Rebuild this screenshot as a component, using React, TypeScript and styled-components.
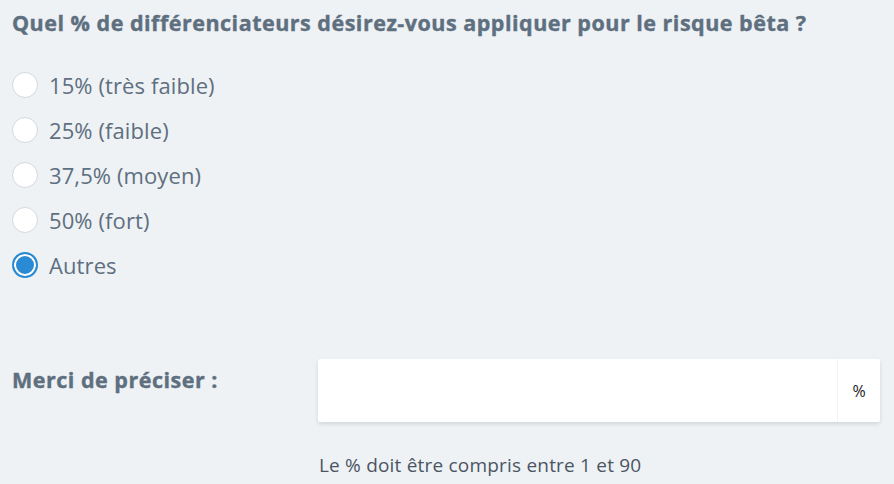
import styled, { createGlobalStyle } from "styled-components";

const GlobalStyle = createGlobalStyle`
  html, body {
    margin: 0;
    padding: 0;
    background: #eef2f5;
  }
  body {
    font-family: "Open Sans", "Noto Sans", sans-serif;
  }
`;

// options de risque bêta
const options = [
  "15% (très faible)",
  "25% (faible)",
  "37,5% (moyen)",
  "50% (fort)",
  "Autres",
];

function App() {
  const selected = "Autres";

  return (
    <Page>
      <GlobalStyle />
      <Question>Quel % de différenciateurs désirez-vous appliquer pour le risque bêta ?</Question>
      <OptionList>
        {options.map((label) => (
          <Option key={label}>
            <Radio checked={label === selected} />
            <OptionLabel>{label}</OptionLabel>
          </Option>
        ))}
      </OptionList>
      <PrecisionRow>
        <PrecisionLabel>Merci de préciser :</PrecisionLabel>
        <Field>
          <FieldInput type="text" />
          <Suffix>%</Suffix>
        </Field>
      </PrecisionRow>
      <Hint>Le % doit être compris entre 1 et 90</Hint>
    </Page>
  );
}

//CSS
const Page = styled.div`
  width: 894px;
  height: 484px;
  box-sizing: border-box;
  padding: 9px 10px 0 12px;
  overflow: hidden;
`;

const Question = styled.h2`
  margin: 0;
  font-size: 21.5px;
  line-height: 28px;
  font-weight: 700;
  color: #5e6f7f;
  letter-spacing: 0.5px;
  -webkit-text-stroke: 0.4px #5e6f7f;
  white-space: nowrap;
`;

const OptionList = styled.div`
  display: flex;
  flex-direction: column;
  gap: 19px;
  margin-top: 35px;
`;

const Option = styled.label`
  display: flex;
  align-items: center;
  gap: 11px;
  height: 26px;
  cursor: pointer;
`;

const Radio = styled.span<{ checked: boolean }>`
  width: 26px;
  height: 26px;
  box-sizing: border-box;
  border-radius: 50%;
  background: ${(p) => (p.checked ? "#2a8bd4" : "#fff")};
  border: ${(p) => (p.checked ? "2px solid #2a8bd4" : "1px solid #d3d8dd")};
  box-shadow: ${(p) => (p.checked ? "inset 0 0 0 2px #fff" : "none")};
  flex-shrink: 0;
`;

const OptionLabel = styled.span`
  font-size: 22px;
  color: #5e6f7f;
  letter-spacing: 0.1px;
`;

const PrecisionRow = styled.div`
  display: flex;
  align-items: center;
  margin-top: 81px;
`;

const PrecisionLabel = styled.div`
  width: 306px;
  font-size: 21.5px;
  font-weight: 700;
  color: #5e6f7f;
  letter-spacing: 0.5px;
  -webkit-text-stroke: 0.4px #5e6f7f;
  margin-top: -22px;
`;

const Field = styled.div`
  display: flex;
  width: 562px;
  height: 63px;
  background: #fff;
  border-radius: 2px;
  box-shadow: 0 2px 4px rgba(0, 0, 0, 0.12);
`;

const FieldInput = styled.input`
  flex: 1;
  border: none;
  outline: none;
  background: transparent;
  font-family: inherit;
  font-size: 18px;
  padding: 0 14px;
  border-right: 1px solid #f3f4f5;
`;

const Suffix = styled.div`
  width: 42px;
  display: flex;
  align-items: center;
  justify-content: center;
  font-size: 16px;
  color: #222;
`;

const Hint = styled.div`
  margin: 30px 0 0 307px;
  font-size: 19px;
  letter-spacing: 0.2px;
  color: #4b5563;
`;

export default App;
